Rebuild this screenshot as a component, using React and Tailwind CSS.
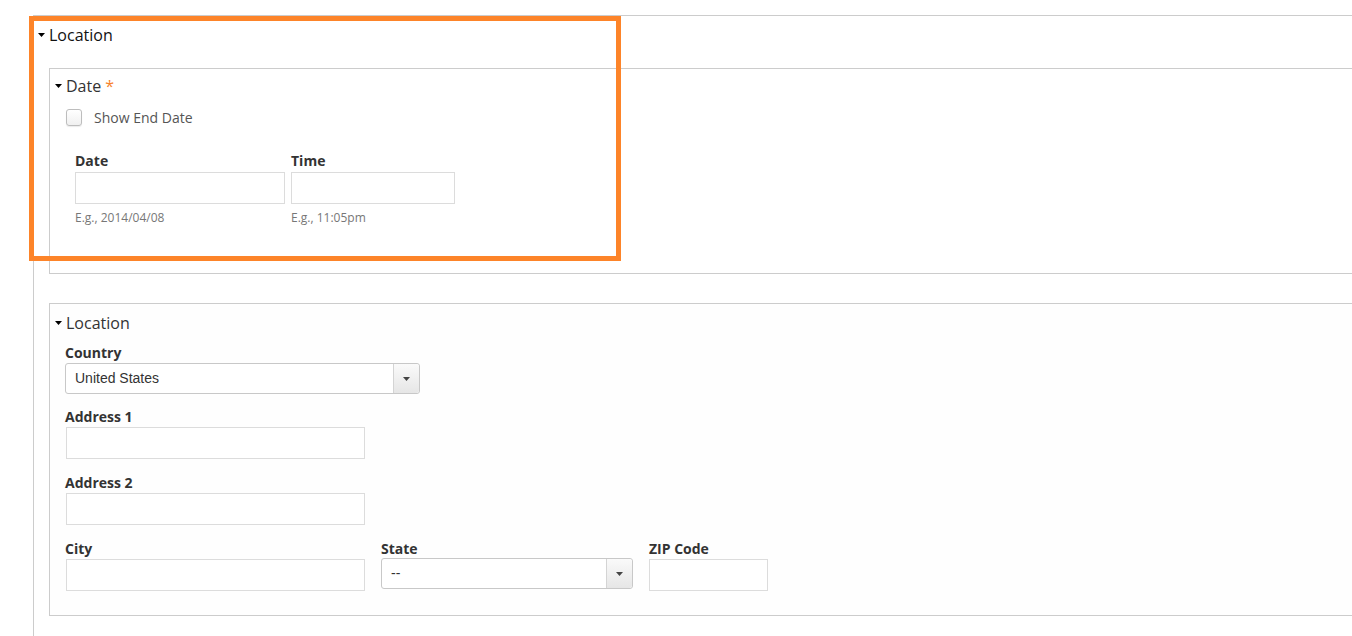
function Caret({ className = "" }) {
  return (
    <svg width="7" height="4" viewBox="0 0 7 4" className={className}>
      <path d="M0 0h7L3.5 4z" fill="currentColor" />
    </svg>
  );
}

function Label({ children }) {
  return (
    <div className="text-[14px] leading-[20px] font-bold text-[#333]">{children}</div>
  );
}

function TextBox({ className = "" }) {
  return <div className={`h-[32px] border border-[#dcdcdc] bg-white ${className}`} />;
}

function SelectBox({ value, className = "" }) {
  return (
    <div
      className={`flex items-stretch rounded-[3px] border border-[#c8c8c8] bg-white ${className}`}
    >
      <div className="flex flex-1 items-center pl-[9px] font-['Liberation_Sans',Arial,sans-serif] text-[14px] text-[#333]">
        {value}
      </div>
      <div className="flex w-[26px] items-center justify-center rounded-r-[3px] border-l border-[#d4d4d4] bg-gradient-to-b from-[#fafafa] to-[#e6e6e6]">
        <Caret className="text-[#444]" />
      </div>
    </div>
  );
}

export default function App() {
  return (
    <div className="relative h-[636px] w-[1352px] overflow-hidden bg-white font-['Open_Sans',sans-serif]">
      <div className="pl-[33px] pt-[15px]">
        <div className="border-l border-t border-[#cccccc] min-h-[640px]">
          {/* outer legend */}
          <div className="flex items-center pl-[4px] pt-[8px] text-[16px] leading-[22px] text-[#111]">
            <Caret className="mr-[4px] text-black" />
            <span>Location</span>
          </div>

          <div className="mt-[22px] pl-[15px]">
            {/* Date fieldset */}
            <div className="border-y border-l border-[#cccccc] pb-[47px] pl-[5px] pt-[6px]">
              <div className="flex items-center text-[16px] leading-[22px] text-[#333]">
                <Caret className="mr-[4px] text-black" />
                <span>Date</span>
                <span className="ml-[4px] text-[#f7822b]">*</span>
              </div>
              <div className="ml-[11px] mt-[12px] flex items-center">
                <div className="h-[17px] w-[16px] rounded-[3px] border border-[#bdbdbd] bg-gradient-to-b from-white to-[#f0f0f0] shadow-[0_1px_1px_rgba(0,0,0,0.08)]" />
                <span className="ml-[12px] text-[14px] leading-[17px] text-[#555]">Show End Date</span>
              </div>
              <div className="ml-[20px] mt-[25px] flex gap-[6px]">
                <div className="w-[210px]">
                  <div className="mb-[1px]">
                    <Label>Date</Label>
                  </div>
                  <TextBox />
                  <div className="mt-[5px] text-[12px] leading-[17px] text-[#777]">E.g., 2014/04/08</div>
                </div>
                <div className="w-[164px]">
                  <div className="mb-[1px]">
                    <Label>Time</Label>
                  </div>
                  <TextBox />
                  <div className="mt-[5px] text-[12px] leading-[17px] text-[#777]">E.g., 11:05pm</div>
                </div>
              </div>
            </div>

            {/* Location fieldset */}
            <div className="mt-[29px] border-y border-l border-[#cccccc] bg-[#fefefe] pb-[24px] pl-[5px] pt-[8px]">
              <div className="flex items-center text-[16px] leading-[22px] text-[#333]">
                <Caret className="mr-[4px] text-black" />
                <span>Location</span>
              </div>
              <div className="ml-[10px] mt-[9px]">
                <Label>Country</Label>
                <SelectBox value="United States" className="h-[31px] w-[355px]" />
              </div>
              <div className="ml-[10px] mt-[13px]">
                <Label>Address 1</Label>
                <TextBox className="ml-[1px] w-[299px]" />
              </div>
              <div className="ml-[10px] mt-[14px]">
                <Label>Address 2</Label>
                <TextBox className="ml-[1px] w-[299px]" />
              </div>
              <div className="ml-[10px] mt-[14px] flex gap-[16px]">
                <div className="w-[300px]">
                  <Label>City</Label>
                  <TextBox className="ml-[1px] w-[299px]" />
                </div>
                <div className="w-[252px]">
                  <Label>State</Label>
                  <SelectBox value="--" className="-mt-[1px] h-[31px] w-[252px]" />
                </div>
                <div className="w-[119px]">
                  <Label>ZIP Code</Label>
                  <TextBox className="w-[119px]" />
                </div>
              </div>
            </div>
          </div>
        </div>
      </div>

      {/* annotation highlight */}
      <div className="absolute left-[29px] top-[16px] h-[245px] w-[592px] border-[5px] border-[#fd8429]" />
    </div>
  );
}
